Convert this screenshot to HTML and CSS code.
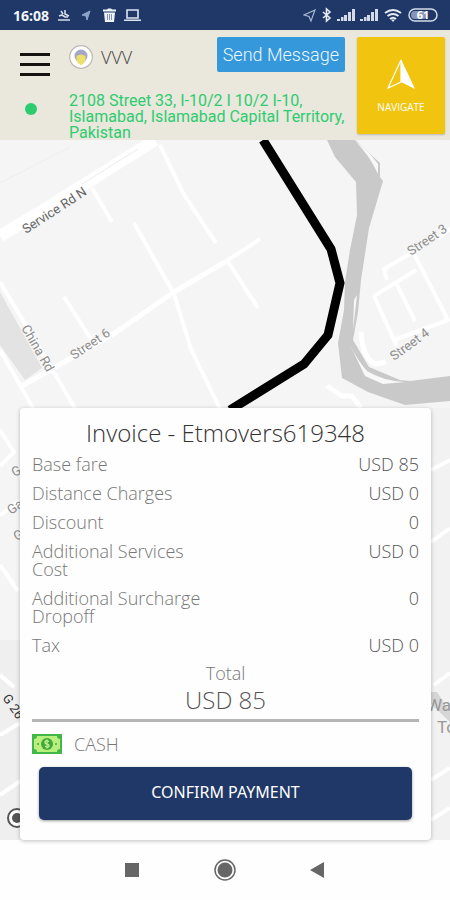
FILE: index.html
```html
<!DOCTYPE html>
<html lang="en">
    <head>
        <meta charset="utf-8">
        <meta name="viewport" content="width=device-width, initial-scale=1">
        <title>Invoice</title>

        <link rel="stylesheet" href="styles.css">
    </head>

    <body>
        <div class="status">
            <span class="time">16:08</span>
            <svg class="status_left" width="84" height="16" viewBox="0 0 84 16">
                <g fill="none" stroke="#d5dcea" stroke-width="1.6">
                    <path d="M2 9l3-1 3 2h3M4 4l2 3M8 3v4l4 2M1 13h12"/>
                    <path d="M33 4l-8 4 4 1 1 4z" fill="#8fa3c9" stroke="#8fa3c9" stroke-width="1"/>
                    <path d="M70 3h11v8h-11zM67 13.2h17" stroke="#dfe5f0"/>
                </g>
                <path d="M46 2.500h4l1-1h3l1 1h4v2H46zM47 5.500h11l-1 9.500h-9z" fill="#f0f3f8"/>
                <path d="M50.500 7v6M52.500 7v6M54.500 7v6" stroke="#8192b5" stroke-width="1"/>
            </svg>
            <svg class="status_right" width="136" height="16" viewBox="0 0 136 16">
                <path d="M12 3L1 8l5 1.500L8 14z" fill="none" stroke="#aab8d4" stroke-width="1.200"/>
                <path d="M20 5l7 6-3.500 3V2L27 5l-7 6" fill="none" stroke="#e6ebf4" stroke-width="1.600"/>
                <g fill="#d3dbe9">
                    <path d="M34 12h3v2h-3zM38 10h2.500v4h-2.500zM41 8h3v6h-3zM45 5h3v9h-3zM49 2h3v12h-3z"/>
                    <path d="M57 12h3v2h-3zM61 10h2.500v4h-2.500zM64 8h3v6h-3zM68 5h3v9h-3zM72 2h3v12h-3z"/>
                </g>
                <g fill="none" stroke="#e6ebf4" stroke-width="2">
                    <path d="M82 6q8-6 16 0M84.500 9q5.500-4 11 0M87 12q3-2.500 6 0"/>
                    <rect x="106" y="2" width="28" height="12" rx="6" stroke="#d3dbe9" stroke-width="1.500"/>
                </g>
                <path d="M88 12.500h4l-2 2.500z" fill="#e6ebf4"/>
                <rect x="108" y="4" width="16" height="8" rx="4" fill="#8796b8"/>
                <text class="battery" x="120" y="12" text-anchor="middle">61</text>
            </svg>
        </div>

        <header class="header">
            <button class="menu" aria-label="Menu">
                <span class="bar"></span>
                <span class="bar"></span>
                <span class="bar"></span>
            </button>
            <div class="user">
                <svg width="24" height="24" viewBox="0 0 24 24">
                    <circle cx="12" cy="12" r="11.300" fill="#fff" stroke="#bcbab4" stroke-width="1.200"/>
                    <circle cx="12" cy="11" r="6.500" fill="#a3a6c4"/>
                    <path d="M7.500 11q4.500-3 9 0v4q-1 4-4.500 5-3.500-1-4.500-5z" fill="#ecdf6e"/>
                </svg>
                <span class="user_name">VVV</span>
            </div>
            <button class="send">Send Message</button>
            <button class="navigate">
                <svg width="30" height="32" viewBox="0 0 30 32">
                    <path d="M15 1l14 30-14-7z" fill="#fff"/>
                    <path d="M15 2L2 30l13-6z" fill="none" stroke="#fff" stroke-width="1.200"/>
                </svg>
                NAVIGATE
            </button>
            <span class="dot"></span>
            <div class="address">2108 Street 33, I-10/2 I 10/2 I-10, Islamabad, Islamabad Capital Territory, Pakistan</div>
        </header>

        <main class="main">
            <svg class="map" viewBox="0 0 450 700" preserveAspectRatio="xMidYMin slice">
                <rect width="450" height="700" fill="#f5f5f5"/>

                <!-- blocks -->
                <path d="M0 152L42 228 25 240 0 205z" fill="#e3e3e3"/>
                <path d="M0 500h20v200H0z" fill="#efefef"/>
                <path d="M431 268h19v432h-19z" fill="#f2f2f2"/>
                <path d="M431 552h6l13 20v10l-19-18z" fill="#d6d6d6"/>

                <!-- roads -->
                <g fill="none" stroke="#fff" stroke-linejoin="round">
                    <path d="M0 96L50 66 155 0" stroke-width="12"/>
                    <path d="M0 43L70 7" stroke="#eee" stroke-width="1"/>
                    <path d="M82 44L138 9" stroke="#ececec" stroke-width="1"/>
                    <path d="M92 48l20 34M160 5l23 48 33 50M134 83l40 71 17 55 29 60M64 157l27 42M0 142l55 92 22 38M0 210l34 60M225 122l35-23M228 122l30 46" stroke-width="4"/>
                    <path d="M22 246L115 193 174 152 225 122" stroke-width="5"/>
                    <path d="M374 156l20 44 54-20-35-68-29 17 3 11M374 156l42-26M396 143l19 38M394 200l3 6M438 98l14-10" stroke-width="4"/>
                    <path d="M361 192q2 28 15 32l10-2M327 246l15 10 10 0 9 12" stroke-width="5"/>
                    <path d="M0 290l14 22-14 14M0 375l20-14M0 425l18 26M0 535l14 12M0 595l20-12M0 655l20-14M431 330l19-10M431 402l19-14M431 640l19-12M431 680l19-12M434 545l16-12" stroke-width="4"/>
                </g>

                <!-- water -->
                <path d="M327 0H355L380 23 380 37 383 41 369 88 361 140 358 172 353 200 369 227 400 240 410 241 450 236V261L405 265 368 252 342 238 338 203 344 170 345 142 350 110 357 75 356 42 335 17z" fill="#c9c9c9"/>
                <path d="M356 2q12 8 22 22v10q-8-18-22-32zM357 155l-4 35 1-30zM350 205q8 16 17 26 16 10 38 11l-22 2-18-8z" fill="#f8f8f8"/>

                <!-- route -->
                <path d="M263 0L331 109 340 143 328 195 304 224 230 270" fill="none" stroke="#000" stroke-width="9"/>

                <!-- names -->
                <g class="street">
                    <text class="street_main" transform="translate(26 94) rotate(-33)">Service Rd N</text>
                    <text transform="translate(21 188) rotate(60)">China Rd</text>
                    <text transform="translate(74 220) rotate(-34)">Street 6</text>
                    <text transform="translate(411 116) rotate(-34)">Street 3</text>
                    <text transform="translate(394 221) rotate(-36)">Street 4</text>
                    <text transform="translate(14 337) rotate(-25)">G</text>
                    <text transform="translate(11 375) rotate(-35)">Ga</text>
                    <text transform="translate(16 401) rotate(-25)">G</text>
                    <text class="street_dark" transform="translate(2 558) rotate(55)">G 26</text>
                </g>
                <g class="place">
                    <text x="427" y="571">Wa</text>
                    <text x="437" y="593">To</text>
                </g>
                <circle cx="17" cy="678" r="9" fill="#fff" stroke="#555" stroke-width="2"/>
                <circle cx="17" cy="678" r="5" fill="#555"/>
            </svg>

            <section class="card">
                <h1 class="title">Invoice - Etmovers619348</h1>
                <dl class="charges">
                    <div class="line"><dt>Base fare</dt><dd>USD 85</dd></div>
                    <div class="line"><dt>Distance Charges</dt><dd>USD 0</dd></div>
                    <div class="line"><dt>Discount</dt><dd>0</dd></div>
                    <div class="line"><dt>Additional Services Cost</dt><dd>USD 0</dd></div>
                    <div class="line"><dt>Additional Surcharge Dropoff</dt><dd>0</dd></div>
                    <div class="line"><dt>Tax</dt><dd>USD 0</dd></div>
                </dl>
                <div class="total">
                    <div class="total_label">Total</div>
                    <div class="total_sum">USD 85</div>
                </div>
                <div class="method">
                    <svg width="30" height="20" viewBox="0 0 30 20">
                        <rect width="30" height="20" fill="#43b649"/>
                        <path d="M5 2h20q0 3 3 3v10q-3 0-3 3H5q0-3-3-3V5q3 0 3-3z" fill="#b9ef7c"/>
                        <circle cx="15" cy="10" r="6" fill="#43a93c"/>
                        <path d="M17 7.500q-4-1.500-4 .5t2 2 2 2-4 .5M15 5.500v9" fill="none" stroke="#c9f591" stroke-width="1.200"/>
                        <circle cx="6" cy="10" r="1" fill="#43a93c"/>
                        <circle cx="24" cy="10" r="1" fill="#43a93c"/>
                    </svg>
                    <span>CASH</span>
                </div>
                <button class="confirm">CONFIRM PAYMENT</button>
            </section>
        </main>

        <nav class="nav">
            <button class="nav_button" aria-label="Recent apps">
                <svg width="24" height="24" viewBox="0 0 24 24"><rect x="5" y="5" width="14" height="14" fill="#666"/></svg>
            </button>
            <button class="nav_button" aria-label="Home">
                <svg width="24" height="24" viewBox="0 0 24 24">
                    <circle cx="12" cy="12" r="10" fill="none" stroke="#666" stroke-width="1.500"/>
                    <circle cx="12" cy="12" r="7.500" fill="#666"/>
                </svg>
            </button>
            <button class="nav_button" aria-label="Back">
                <svg width="24" height="24" viewBox="0 0 24 24"><path d="M4 12l14-8v16z" fill="#666"/></svg>
            </button>
        </nav>
    </body>
</html>
```

FILE: styles.css
```css
* {
    box-sizing: border-box;
}

body {
    margin: 0;
    min-height: 100vh;
    display: flex;
    flex-direction: column;
    background: #fefefe;
    font-family: "Open Sans", "Liberation Sans", sans-serif;
}

button {
    border: 0;
    padding: 0;
    background: none;
    font: inherit;
}

svg {
    display: block;
}

.status {
    height: 30px;
    padding: 0 11px 0 13px;
    display: flex;
    align-items: center;
    background: #1f3868;
    color: #f3f5f9;
}

.time {
    font-size: 14px;
    font-weight: 700;
}

.status_left {
    margin-left: 8px;
}

.status_right {
    margin-left: auto;
}

.battery {
    font-size: 11px;
    font-weight: 700;
    fill: #fff;
}

.header {
    padding: 7px 5px 0 20px;
    display: grid;
    grid-template-columns: 37px 1fr auto 88px;
    grid-template-rows: 35px 48px;
    column-gap: 12px;
    row-gap: 20px;
    background: #eae7dc;
}

.menu {
    width: 30px;
    margin-top: 16px;
    display: flex;
    flex-direction: column;
    gap: 7px;
}

.bar {
    width: 30px;
    height: 3px;
    flex: none;
    background: #15130f;
}

.user {
    display: flex;
    align-items: center;
    gap: 8px;
    height: 40px;
}

.user_name {
    font-size: 18px;
    font-weight: 300;
    color: #444;
}

.send {
    padding: 0 6px;
    border-radius: 2px;
    background: #3498db;
    color: #eef7fd;
    font-family: Roboto, sans-serif;
    font-size: 18px;
    font-weight: 300;
}

.navigate {
    grid-column: 4;
    grid-row: 1 / 3;
    height: 97px;
    display: flex;
    flex-direction: column;
    align-items: center;
    justify-content: center;
    gap: 10px;
    border-radius: 2px;
    background: #f1c40f;
    box-shadow: 0 1px 2px rgba(0, 0, 0, .2);
    color: #fff;
    font-size: 10px;
    line-height: 14px;
}

.dot {
    width: 12px;
    height: 12px;
    margin: 11px 0 0 5px;
    border-radius: 50%;
    background: #2ecc71;
}

.address {
    grid-column: 2 / 4;
    padding-top: 1px;
    color: #2ecc71;
    font-family: Roboto, sans-serif;
    font-size: 16px;
    line-height: 16px;
}

.main {
    position: relative;
    flex: 1;
    display: flex;
    flex-direction: column;
    justify-content: flex-end;
    padding: 0 19px 0 20px;
}

.map {
    position: absolute;
    inset: 0;
    width: 100%;
    height: 100%;
}

.street {
    font-family: Roboto, sans-serif;
    font-size: 13px;
    fill: #8c8c8c;
}

.street_main {
    fill: #666;
}

.street_dark {
    fill: #333;
}

.place {
    font-family: Roboto, sans-serif;
    font-size: 17px;
    fill: #999;
}

.card {
    position: relative;
    padding: 11px 12px 20px;
    border-radius: 4px;
    background: #fefefe;
    box-shadow: 0 1px 4px rgba(0, 0, 0, .25);
    color: #555;
    font-size: 18px;
    font-weight: 300;
    line-height: 18px;
}

.title {
    margin: 0 0 8px;
    color: #333;
    font-size: 24px;
    font-weight: 300;
    line-height: 28px;
    text-align: center;
}

.charges {
    margin: 0;
    display: flex;
    flex-direction: column;
    gap: 11px;
}

.line {
    display: flex;
    justify-content: space-between;
}

.line dt {
    width: 48%;
    color: #777;
}

.line dd {
    margin: 0;
}

.total {
    margin-top: 10px;
    padding-bottom: 6px;
    border-bottom: 3px solid #b5b5b5;
    text-align: center;
}

.total_label {
    color: #777;
}

.total_sum {
    margin-top: 5px;
    font-size: 24px;
    line-height: 26px;
}

.method {
    margin: 12px 0 13px;
    display: flex;
    align-items: center;
    gap: 12px;
    color: #777;
}

.confirm {
    display: block;
    width: calc(100% - 14px);
    height: 53px;
    margin: 0 7px;
    padding-bottom: 3px;
    border-radius: 5px;
    background: #1f3868;
    box-shadow: 0 1px 3px rgba(0, 0, 0, .4);
    color: #fff;
    font-family: "Noto Sans", sans-serif;
    font-size: 16px;
    font-weight: 400;
}

.nav {
    height: 60px;
    display: flex;
    align-items: center;
    justify-content: center;
    gap: 69px;
    background: #fefefe;
}
```
